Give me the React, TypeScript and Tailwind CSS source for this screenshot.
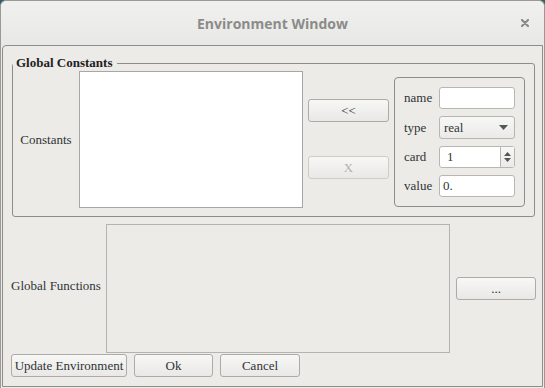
// Botão estilo GTK
function Btn({
  children,
  className = "",
  disabled = false,
}: {
  children: React.ReactNode;
  className?: string;
  disabled?: boolean;
}) {
  return (
    <button
      disabled={disabled}
      className={
        "flex h-[23px] items-center justify-center rounded-[3px] border bg-gradient-to-b from-[#f7f7f6] to-[#e9e8e6] text-[13px] leading-none " +
        (disabled
          ? "border-[#cfccc8] text-[#b4b2ae]"
          : "border-[#aeaba7] text-[#2e3436]") +
        " " +
        className
      }
    >
      {children}
    </button>
  );
}

function Field({ label, children }: { label: string; children: React.ReactNode }) {
  return (
    <div className="flex items-center">
      <span className="w-[35px] text-[13px] text-[#2e3436]">{label}</span>
      {children}
    </div>
  );
}

export default function App() {
  return (
    <div
      className="h-[388px] w-[545px] overflow-hidden bg-[#2f5f6a]"
      style={{ fontFamily: '"Liberation Serif", serif' }}
    >
      <div className="flex h-full flex-col rounded-t-[6px] border-x border-t border-[#9a9996] bg-[#edebe7]">
        {/* Barra de título */}
        <div className="grid h-[44px] shrink-0 grid-cols-[1fr_auto_1fr] items-center rounded-t-[6px] bg-gradient-to-b from-[#f0f0ef] to-[#e8e8e7]">
          <span />
          <span
            className="text-[14px] font-bold text-[#8b8b89]"
            style={{ fontFamily: '"Open Sans", sans-serif' }}
          >
            Environment Window
          </span>
          <span className="flex justify-end pr-[15px]">
            <svg width="8" height="8" viewBox="0 0 8 8">
              <path d="M1 1l6 6M7 1L1 7" stroke="#8b8b89" strokeWidth="2.2" strokeLinecap="round" />
            </svg>
          </span>
        </div>

        {/* Corpo */}
        <div className="mx-[1px] mb-[1px] flex flex-1 flex-col rounded-tl-[4px] border border-[#8f8d8a] pl-[8px] pt-[9px]">
          <fieldset className="ml-[1px] w-[523px] rounded-[3px] border border-[#8f8d8a] pb-[8px]">
            <legend className="pl-[3px] pr-[5px] text-[13px] font-bold leading-[16px] text-[#1e1e1e]">
              Global Constants
            </legend>
            <div className="flex items-start">
              <div className="flex h-[137px] w-[66px] items-center justify-center text-[13px] text-[#2e3436]">
                Constants
              </div>
              <div className="h-[137px] w-[224px] border border-[#a9a7a4] bg-white" />
              <div className="ml-[5px] mt-[28px] flex flex-col gap-[34px]">
                <Btn className="w-[81px]">&lt;&lt;</Btn>
                <Btn className="w-[81px]" disabled>
                  X
                </Btn>
              </div>
              <div className="ml-[5px] mt-[6px] flex h-[130px] w-[131px] flex-col gap-[7px] rounded-[4px] border border-[#8f8d8a] pl-[9px] pt-[9px]">
                <Field label="name">
                  <div className="h-[22px] w-[76px] rounded-[3px] border border-[#b8b6b2] bg-white" />
                </Field>
                <Field label="type">
                  <div className="flex h-[23px] w-[76px] items-center justify-between rounded-[3px] border border-[#b8b6b2] bg-gradient-to-b from-[#f7f7f6] to-[#ebeae8] pl-[4px] pr-[6px] text-[13px] text-[#2e3436]">
                    real
                    <svg width="9" height="5" viewBox="0 0 9 5">
                      <path d="M0 0h9L4.5 5z" fill="#555753" />
                    </svg>
                  </div>
                </Field>
                <Field label="card">
                  <div className="flex h-[22px] w-[76px] items-stretch rounded-[3px] border border-[#b8b6b2] bg-white text-[13px] text-[#2e3436]">
                    <span className="flex flex-1 items-center pl-[7px]">1</span>
                    <span className="flex w-[14px] flex-col items-center justify-center gap-[2px] border-l border-[#b8b6b2] bg-gradient-to-b from-[#f7f7f6] to-[#ebeae8]">
                      <svg width="7" height="4" viewBox="0 0 7 4">
                        <path d="M0 4h7L3.5 0z" fill="#555753" />
                      </svg>
                      <svg width="7" height="4" viewBox="0 0 7 4">
                        <path d="M0 0h7L3.5 4z" fill="#555753" />
                      </svg>
                    </span>
                  </div>
                </Field>
                <Field label="value">
                  <div className="flex h-[22px] w-[76px] items-center rounded-[3px] border border-[#b8b6b2] bg-white pl-[3px] text-[13px] text-[#2e3436]">
                    0.
                  </div>
                </Field>
              </div>
            </div>
          </fieldset>

          {/* Funções globais */}
          <div className="mt-[7px] flex items-center">
            <span className="w-[95px] pb-[6px] text-[13px] text-[#2e3436]">Global Functions</span>
            <div className="h-[129px] w-[344px] border border-[#b5b3af]" />
            <Btn className="ml-[6px] w-[80px]">...</Btn>
          </div>

          <div className="mt-[1px] flex gap-[7px]">
            <Btn className="w-[116px]">Update Environment</Btn>
            <Btn className="w-[79px]">Ok</Btn>
            <Btn className="w-[80px]">Cancel</Btn>
          </div>
        </div>
      </div>
    </div>
  );
}
